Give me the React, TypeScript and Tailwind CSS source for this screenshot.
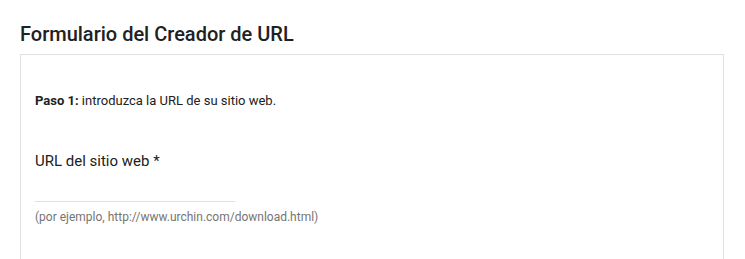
export default function App() {
  return (
    <div className="w-[745px] h-[259px] overflow-hidden bg-white font-['Roboto',sans-serif]">
      <div className="pt-[22px] pl-[20px] pr-[21px]">
        <h1 className="text-[20px] leading-[24px] text-[#212121] font-medium">Formulario del Creador de URL</h1>
        <div className="mt-[8px] border border-[#e0e0e0] h-[260px] px-[14px] pt-[38px]">
          <p className="text-[13px] leading-[16px] text-[#212121]">
            <span className="font-bold">Paso 1:</span> introduzca la URL de su sitio web.
          </p>
          <div className="mt-[42px] text-[15px] leading-[20px] text-[#212121]">URL del sitio web *</div>
          <div className="mt-[30px] w-[200px] h-px bg-[#e0e0e0]"></div>
          <div className="mt-[7px] text-[12px] leading-[16px] text-[#757575]">(por ejemplo, http://www.urchin.com/download.html)</div>
        </div>
      </div>
    </div>
  );
}
